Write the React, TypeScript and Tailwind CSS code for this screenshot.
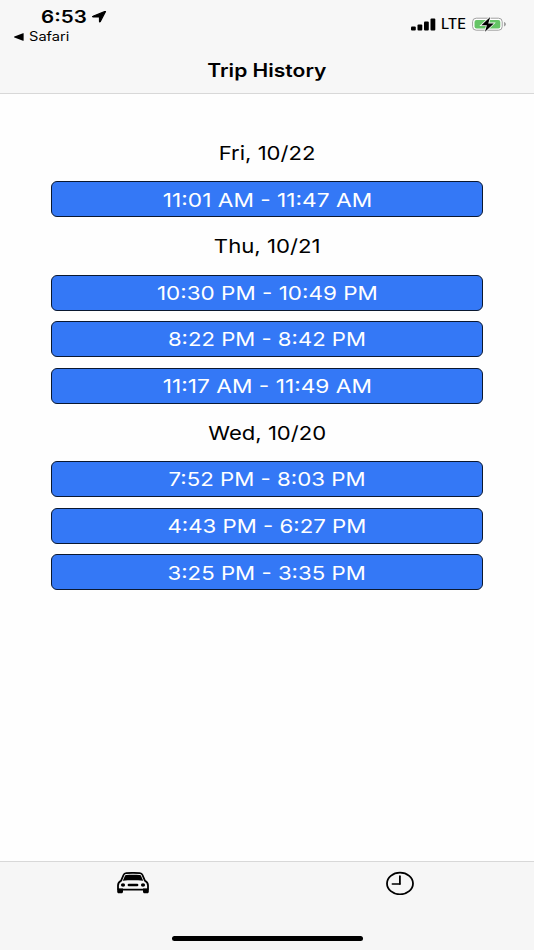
import clsx from "clsx";

interface TripDay {
  label: string;
  labelScale: string;
  trips: { time: string; scale: string }[];
}

const days: TripDay[] = [
  {
    label: "Fri, 10/22",
    labelScale: "scale-x-[1.15]",
    trips: [{ time: "11:01 AM - 11:47 AM", scale: "scale-x-[1.183]" }],
  },
  {
    label: "Thu, 10/21",
    labelScale: "scale-x-[1.155]",
    trips: [
      { time: "10:30 PM - 10:49 PM", scale: "scale-x-[1.17]" },
      { time: "8:22 PM - 8:42 PM", scale: "scale-x-[1.152]" },
      { time: "11:17 AM - 11:49 AM", scale: "scale-x-[1.183]" },
    ],
  },
  {
    label: "Wed, 10/20",
    labelScale: "scale-x-[1.15]",
    trips: [
      { time: "7:52 PM - 8:03 PM", scale: "scale-x-[1.16]" },
      { time: "4:43 PM - 6:27 PM", scale: "scale-x-[1.158]" },
      { time: "3:25 PM - 3:35 PM", scale: "scale-x-[1.158]" },
    ],
  },
];

const StatusBar = () => {
  return (
    <div className="flex h-[47px] justify-between pr-[27px] pl-[14px]">
      <div className="pt-[7px]">
        <div className="flex h-5 items-center pl-[27px]">
          <span className="w-[46px] origin-left scale-x-[1.21] text-[17px] leading-5 font-semibold">
            6:53
          </span>
          <svg
            className="ml-[4px] h-[13px] w-[16px]"
            viewBox="0 0 16 13"
            preserveAspectRatio="none"
          >
            <path
              d="M14.4.8 9.2 10.6c-.2.4-.7.4-.7-.1V6H2.2c-.7 0-.8-.5-.2-.7L13.8.5c.5-.2.8 0 .6.3z"
              stroke="#000"
              strokeWidth="1.2"
              strokeLinejoin="round"
            />
          </svg>
        </div>
        <div className="flex h-[19px] items-center pt-px">
          <svg className="h-[8px] w-[10px]" viewBox="0 0 10 8">
            <path d="M.4 3.5 9 .2c.3-.1.6 0 .6.4v6.8c0 .4-.3.5-.6.4L.4 4.5c-.5-.2-.5-.8 0-1z" />
          </svg>
          <span className="ml-[4.5px] origin-left scale-x-[1.17] text-[12.5px] leading-4">
            Safari
          </span>
        </div>
      </div>
      <div className="flex h-[48px] items-center">
        <svg className="h-[13px] w-[25px]" viewBox="0 0 25 13">
          <rect x="0" y="8.4" width="4.8" height="4.2" rx="1" />
          <rect x="6.5" y="6.4" width="4.8" height="6.2" rx="1" />
          <rect x="13" y="3.6" width="4.8" height="9" rx="1" />
          <rect x="19.5" y="0.4" width="4.8" height="12.2" rx="1" />
        </svg>
        <span className="ml-[5px] w-[26px] origin-left scale-x-[1.04] text-[14px] leading-4 font-medium">
          LTE
        </span>
        <svg className="ml-[5px] h-[15px] w-[35px]" viewBox="0 0 35 15">
          <rect x="0.6" y="1.2" width="29.6" height="12" rx="3.6" fill="#fff" stroke="#a0a0a0" />
          <rect x="2.5" y="2.9" width="25.8" height="8.6" rx="2" fill="#65c466" />
          <path d="M32 5c2.6.7 2.6 3.7 0 4.4z" fill="#a0a0a0" />
          <path
            d="M18.2 0 9.4 8.3h5.5L13 14.8l8.8-8.4h-5.6z"
            fill="#000"
            stroke="#f7f7f7"
            strokeWidth="1.6"
            paintOrder="stroke"
          />
        </svg>
      </div>
    </div>
  );
};

const CarIcon = () => {
  return (
    <svg className="h-[22px] w-[34px]" viewBox="0 0 34 22" preserveAspectRatio="none">
      <path
        d="M5 8.8 7.5 3C8 1.8 8.9 1.3 10.3 1.2c4.3-.4 9.1-.4 13.4 0 1.4.1 2.3.6 2.8 1.8l2.5 5.8c2.2 1.2 3 2.3 3 4.6v3.2c0 .7-.5 1-1.2 1H3.2c-.7 0-1.2-.3-1.2-1v-3.2c0-2.3.8-3.4 3-4.6z"
        fill="#f6f6f6"
        stroke="#000"
        strokeWidth="1.8"
      />
      <path d="M6.8 8.7 8.9 4.1c.3-.7.6-1 1.4-1.1 4.1-.4 9.3-.4 13.4 0 .8.1 1.1.4 1.4 1.1l2.1 4.6c-6.6-.6-13.8-.6-20.4 0z" />
      <path d="M1.2 16.5h5.8v3.3c0 .9-.6 1.5-1.5 1.5H2.7c-.9 0-1.500-.6-1.500-1.500zM27 16.500h5.800v3.300c0 .9-.6 1.500-1.500 1.500h-2.800c-.9 0-1.500-.6-1.500-1.500z" />
      <ellipse cx="7" cy="13" rx="2.1" ry="1.8" />
      <ellipse cx="27" cy="13" rx="2.1" ry="1.8" />
      <rect x="11.6" y="11.7" width="10.8" height="2.6" rx="1.3" />
    </svg>
  );
};

const ClockIcon = () => {
  return (
    <svg
      className="h-[24px] w-[28px]"
      viewBox="0 0 28 24"
      fill="none"
      stroke="#000"
      strokeLinecap="round"
    >
      <ellipse cx="14" cy="12.5" rx="13" ry="10.8" strokeWidth="1.8" />
      <path d="M13.9 5.2v7.7" strokeWidth="1.8" />
      <path d="M13.9 13H6.3" strokeWidth="1.5" />
    </svg>
  );
};

const App = () => {
  return (
    <div className="flex h-[950px] w-[534px] flex-col overflow-hidden bg-[#fefefe] font-['Inter',sans-serif] text-black">
      <header className="h-[94px] border-b border-[#d8d8d8] bg-[#f7f7f7]">
        <StatusBar />
        <h1 className="flex h-[46px] items-center justify-center text-[18px] font-semibold">
          <span className="scale-x-[1.17]">Trip History</span>
        </h1>
      </header>

      <main className="flex-1 px-[51px] pt-[35.5px]">
        {days.map((day) => (
          <section key={day.label}>
            <h2 className="flex h-[46.64px] items-center justify-center pt-px text-[19.2px] font-[370]">
              <span className={clsx("whitespace-nowrap", day.labelScale)}>{day.label}</span>
            </h2>
            {day.trips.map((trip) => (
              <div key={trip.time} className="flex h-[46.64px] items-center">
                <button className="flex h-9 w-full items-center justify-center rounded-[6px] border border-x-[1.5px] border-[#0a1830] bg-[#3478f6] pt-px text-[19.2px] font-[370] text-white">
                  <span className={clsx("whitespace-nowrap", trip.scale)}>{trip.time}</span>
                </button>
              </div>
            ))}
          </section>
        ))}
      </main>

      <nav className="relative flex h-[89px] border-t border-[#d8d8d8] bg-[#f6f6f6]">
        <div className="flex h-[42px] flex-1 items-center justify-center pr-px">
          <CarIcon />
        </div>
        <div className="flex h-[42px] flex-1 items-center justify-center pr-px">
          <ClockIcon />
        </div>
        <div className="absolute bottom-[9px] left-[171.5px] h-[5px] w-[191px] rounded-full bg-black" />
      </nav>
    </div>
  );
};

export default App;
